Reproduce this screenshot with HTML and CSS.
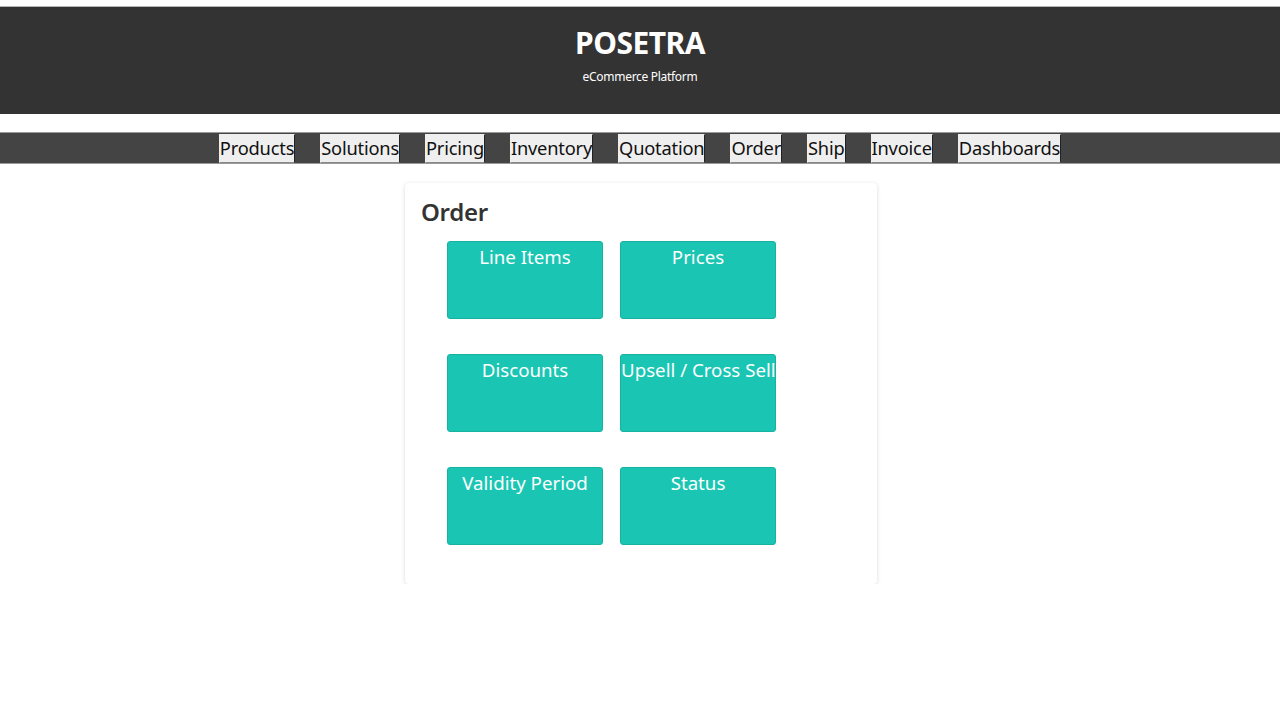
FILE: index.html
```html
<!DOCTYPE html>
<html>
<head>
<meta charset="utf-8">
<link rel="stylesheet" href="styles.css">
</head>
<body>
<header class="masthead">
  <h1 class="brand">POSETRA</h1>
  <p class="tagline">eCommerce Platform</p>
</header>
<nav class="menu">
  <button class="menu-btn">Products</button>
  <button class="menu-btn">Solutions</button>
  <button class="menu-btn">Pricing</button>
  <button class="menu-btn">Inventory</button>
  <button class="menu-btn">Quotation</button>
  <button class="menu-btn">Order</button>
  <button class="menu-btn">Ship</button>
  <button class="menu-btn">Invoice</button>
  <button class="menu-btn">Dashboards</button>
</nav>
<main class="content">
  <section class="card">
    <h2 class="card-title">Order</h2>
    <div class="tiles">
      <div class="tile">Line Items</div>
      <div class="tile">Prices</div>
      <div class="tile">Discounts</div>
      <div class="tile">Upsell / Cross Sell</div>
      <div class="tile">Validity Period</div>
      <div class="tile">Status</div>
    </div>
  </section>
</main>
</body>
</html>
```
FILE: styles.css
```css
* { box-sizing: border-box; }
body {
  margin: 0;
  padding-top: 6px;
  font-family: "Noto Sans", "Open Sans", sans-serif;
  background: #fff;
}
.masthead {
  background: #333333;
  border-top: 1px solid #b5b5b5;
  height: 108px;
  display: flex;
  flex-direction: column;
  align-items: center;
  padding-top: 17px;
}
.brand {
  margin: 0;
  color: #fff;
  font-size: 30px;
  font-weight: 700;
  line-height: 38px;
  letter-spacing: -0.5px;
}
.tagline {
  margin: 7px 0 0;
  color: #fff;
  font-size: 12px;
  line-height: 16px;
  letter-spacing: -0.3px;
}
.menu {
  margin-top: 18px;
  background: #444444;
  border-top: 1px solid #9a9a9a;
  border-bottom: 1px solid #9a9a9a;
  height: 32px;
  display: flex;
  justify-content: center;
  align-items: center;
  gap: 25px;
}
.menu-btn {
  font-family: "Noto Sans", "Open Sans", sans-serif;
  font-size: 18.3px;
  letter-spacing: -0.2px;
  line-height: 26px;
  height: 29px;
  padding: 0;
  background: #efefef;
  color: #111;
  border: 1px solid #efefef;
  border-right-color: #222;
  border-bottom-color: #888;
}
.content {
  display: flex;
  justify-content: center;
  padding-top: 19px;
}
.card {
  width: 472px;
  height: 401px;
  background: #fff;
  border-radius: 4px;
  box-shadow: 0 1px 4px rgba(0,0,0,0.15);
  padding: 12px 16px;
  margin-left: 2px;
}
.card-title {
  margin: 0;
  color: #333;
  font-size: 24px;
  font-weight: 600;
  line-height: 34px;
  letter-spacing: -0.3px;
}
.tiles {
  margin: 12px 0 0 26px;
  display: grid;
  grid-template-columns: 156px 156px;
  grid-auto-rows: 78px;
  column-gap: 17px;
  row-gap: 35px;
}
.tile {
  background: #1ac6b3;
  border: 1px solid #16b3a1;
  border-radius: 3px;
  color: #fff;
  text-align: center;
  font-size: 18.7px;
  line-height: 30px;
  letter-spacing: 0;
  white-space: nowrap;
  overflow: hidden;
}
```
